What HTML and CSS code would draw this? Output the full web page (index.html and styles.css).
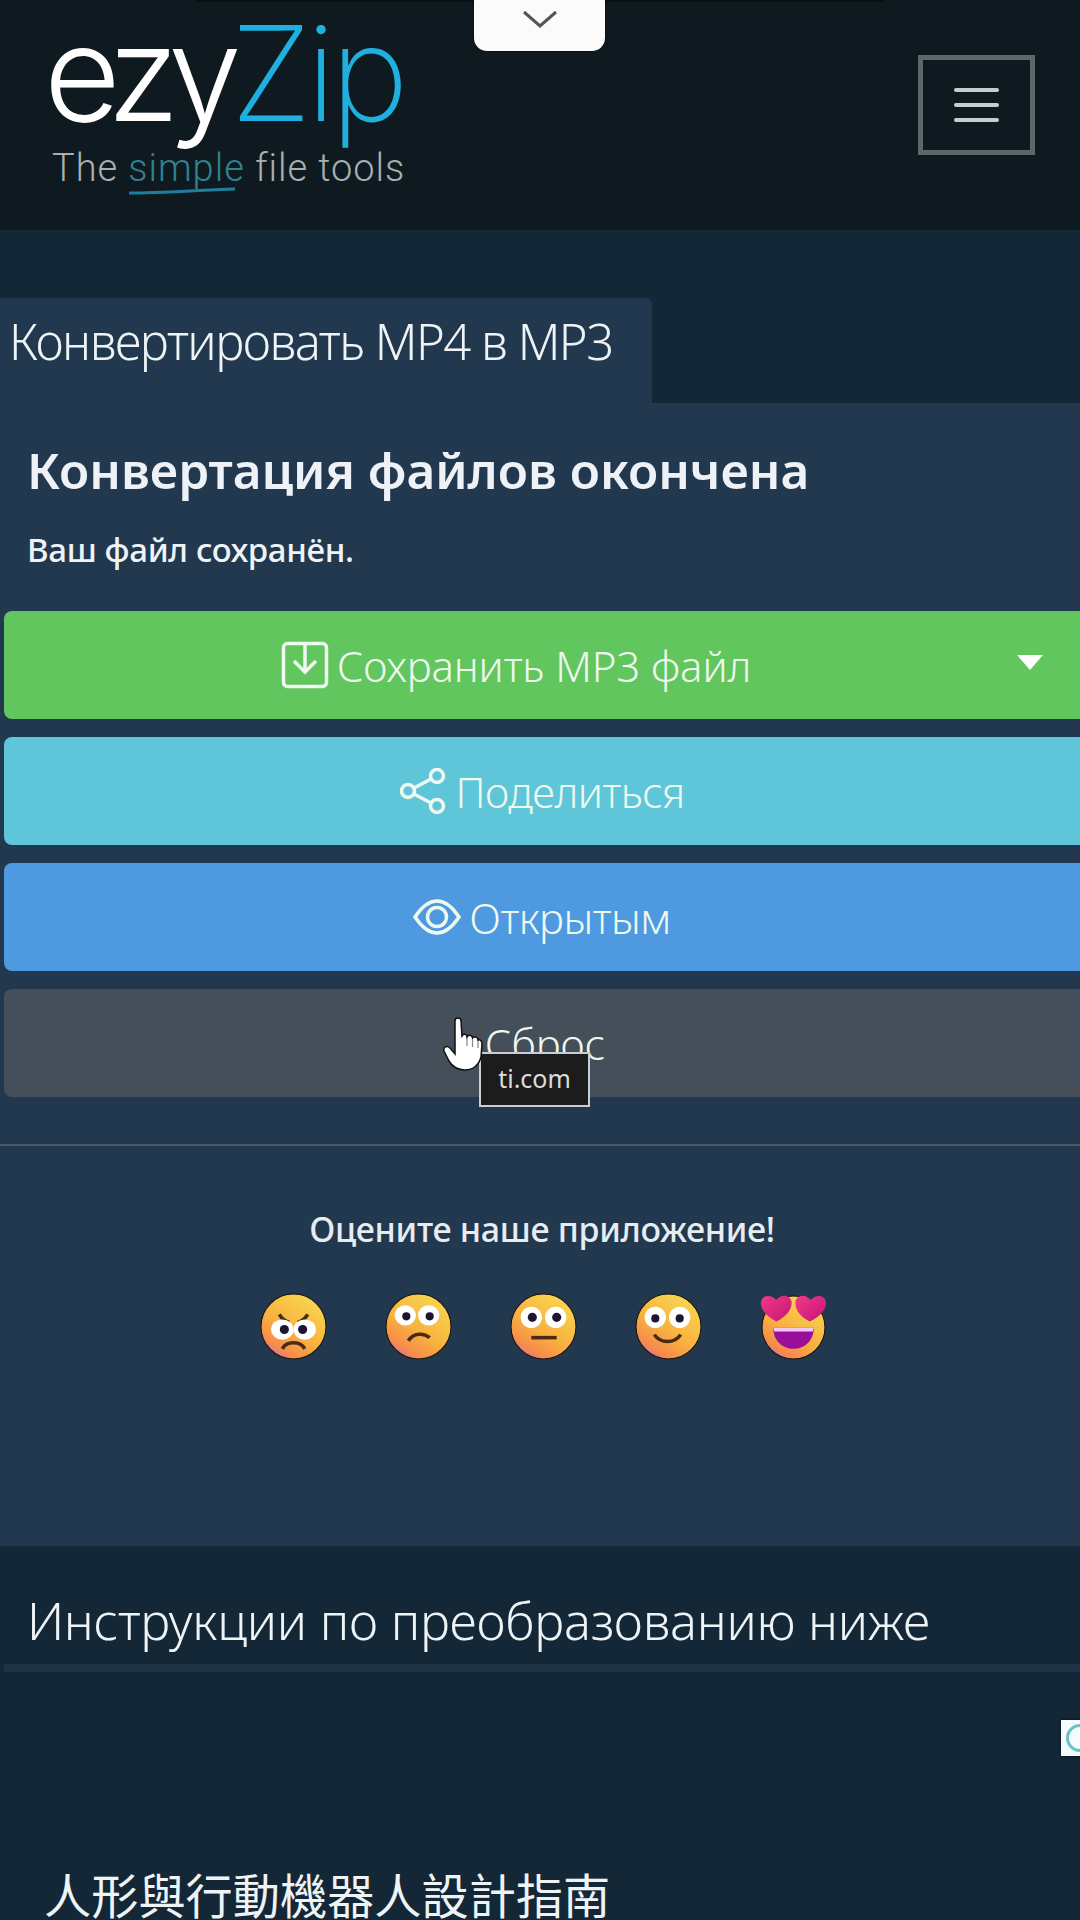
FILE: index.html
```html
<!DOCTYPE html>
<html lang="ru">
<head>
<meta charset="utf-8">
<title>Конвертировать MP4 в MP3</title>
<link rel="stylesheet" href="styles.css">
</head>
<body>
<svg class="defs" aria-hidden="true">
  <defs>
    <linearGradient id="face" x1="0.8" y1="0.1" x2="0.25" y2="0.95">
      <stop offset="0" stop-color="#f7d44f"/>
      <stop offset="0.55" stop-color="#f9b23f"/>
      <stop offset="0.9" stop-color="#f78a4c"/>
      <stop offset="1" stop-color="#d87aa0"/>
    </linearGradient>
    <linearGradient id="heart" x1="0" y1="0" x2="1" y2="1">
      <stop offset="0" stop-color="#f23a86"/>
      <stop offset="1" stop-color="#c3147a"/>
    </linearGradient>
  </defs>
</svg>

<div class="shade-top"></div>
<button class="pull-tab" aria-label="Развернуть">
  <svg viewBox="0 0 36 20" width="36" height="20"><path d="M2 3 L18 17 L34 3" fill="none" stroke="#555" stroke-width="3"/></svg>
</button>

<header class="topbar">
  <a class="logo">
    <div class="logo-word"><span class="ezy">ezy</span><span class="zip">Zip</span></div>
    <div class="logo-tag">The <span class="simple">simple<svg class="swoosh" viewBox="0 0 108 8" preserveAspectRatio="none"><path d="M1 6 C35 6 70 3 107 2" fill="none" stroke="#1d7f9c" stroke-width="3"/></svg></span> file tools</div>
  </a>
  <button class="burger" aria-label="Меню"><span></span><span></span><span></span></button>
</header>

<main class="page">
  <h1 class="tab">Конвертировать MP4 в MP3</h1>
  <section class="card">
    <h2 class="done-title">Конвертация файлов окончена</h2>
    <p class="done-sub">Ваш файл сохранён.</p>
    <div class="actions">
      <a class="btn btn-green">
        <svg class="ico" viewBox="0 0 48 48" width="48" height="48"><rect x="2.5" y="2.5" width="43" height="43" rx="4" fill="none" stroke="currentColor" stroke-width="3.5"/><path d="M24 3 V29 M13 20 L24 31 L35 20" fill="none" stroke="currentColor" stroke-width="3.5"/></svg>
        <span>Сохранить MP3 файл</span>
        <i class="caret"></i>
      </a>
      <a class="btn btn-cyan">
        <svg class="ico" viewBox="0 0 48 48" width="48" height="48"><g fill="none" stroke="currentColor" stroke-width="3.5"><circle cx="38" cy="9" r="6.5"/><circle cx="9" cy="24" r="6.5"/><circle cx="38" cy="39" r="6.5"/><path d="M15 21 L32 12 M15 27 L32 36"/></g></svg>
        <span>Поделиться</span>
      </a>
      <a class="btn btn-blue">
        <svg class="ico" viewBox="0 0 48 48" width="48" height="48"><g fill="none" stroke="currentColor" stroke-width="3.5"><path d="M2 24 C10 12 17 8 24 8 C31 8 38 12 46 24 C38 36 31 40 24 40 C17 40 10 36 2 24 Z"/><circle cx="24" cy="24" r="9.5"/></g></svg>
        <span>Открытым</span>
      </a>
      <a class="btn btn-grey">
        <span class="reset-label">Сброс</span>
        <svg class="hand" viewBox="0 0 40 54" width="40" height="54"><path d="M12 4 C12 0 18 0 18 4 L19 19 C21 16 24 17 24 20 C26 17 29 18 29.500 21 C31 19 35 20 35 23 C37 22 39 24 39 27 L38 40 C36 48 30 53 22 53 C14 53 9 49 6 44 L1 34 C0 30 4 28 7 31 L12 37 Z" fill="#fff" stroke="#111" stroke-width="1.500"/><path d="M24 21 V29 M29.500 22 V30 M35 24 V31" fill="none" stroke="#888" stroke-width="1.200"/></svg>
        <span class="tip">ti.com</span>
      </a>
    </div>
    <hr class="rule">
    <p class="rate-title">Оцените наше приложение!</p>
    <div class="rate-row">
      <svg class="emoji" viewBox="0 0 66 66" width="67" height="67"><circle cx="33" cy="33" r="32" fill="url(#face)" stroke="#1a1208" stroke-width="1"/><path d="M19 21 C22 26 25 28 29 29 M47 21 C44 26 41 28 37 29" fill="none" stroke="#4a2a12" stroke-width="3.500"/><ellipse cx="22" cy="36" rx="11" ry="10" fill="#fff"/><ellipse cx="44" cy="36" rx="11" ry="10" fill="#fff"/><circle cx="24" cy="36" r="4.500" fill="#1c1430"/><circle cx="42" cy="36" r="4.500" fill="#1c1430"/><path d="M22 55 C26 47 40 47 44 55" fill="none" stroke="#4a2a12" stroke-width="3.500"/></svg>
      <svg class="emoji" viewBox="0 0 66 66" width="67" height="67"><circle cx="33" cy="33" r="32" fill="url(#face)" stroke="#1a1208" stroke-width="1"/><ellipse cx="20" cy="22" rx="10.500" ry="10" fill="#fff"/><ellipse cx="43" cy="22" rx="10.500" ry="10" fill="#fff"/><circle cx="21" cy="23" r="4" fill="#1c1430"/><circle cx="44" cy="23" r="4" fill="#1c1430"/><path d="M23 47 C28 39 38 39 44 44" fill="none" stroke="#4a2a12" stroke-width="3.500"/></svg>
      <svg class="emoji" viewBox="0 0 66 66" width="67" height="67"><circle cx="33" cy="33" r="32" fill="url(#face)" stroke="#1a1208" stroke-width="1"/><ellipse cx="21" cy="24" rx="10.500" ry="10.500" fill="#fff"/><ellipse cx="45" cy="24" rx="10.500" ry="10.500" fill="#fff"/><circle cx="22" cy="24" r="4.500" fill="#1c1430"/><circle cx="46" cy="24" r="4.500" fill="#1c1430"/><path d="M21 44 H46" fill="none" stroke="#4a2a12" stroke-width="3.500"/></svg>
      <svg class="emoji" viewBox="0 0 66 66" width="67" height="67"><circle cx="33" cy="33" r="32" fill="url(#face)" stroke="#1a1208" stroke-width="1"/><ellipse cx="20" cy="24" rx="10.500" ry="10.500" fill="#fff"/><ellipse cx="44" cy="24" rx="10.500" ry="10.500" fill="#fff"/><circle cx="20" cy="25" r="4" fill="#1c1430"/><circle cx="44" cy="25" r="4" fill="#1c1430"/><path d="M19 41 C25 50 39 50 45 41" fill="none" stroke="#4a2a12" stroke-width="3.500"/></svg>
      <svg class="emoji" viewBox="0 0 66 66" width="67" height="67"><circle cx="33" cy="34" r="31" fill="url(#face)" stroke="#1a1208" stroke-width="1"/><path d="M13 34 H53 C53 47 44 55 33 55 C22 55 13 47 13 34 Z" fill="#9a0f9a"/><path d="M13 34 H53 L52 38 H14 Z" fill="#f4c8f6"/><path d="M16 28 C6 23 0 15 1 9 C2 2 11 1 16 7 C20 1 29 1 31 8 C32 15 27 23 16 28 Z" fill="url(#heart)"/><path d="M49 28 C38 23 34 15 35 8 C37 1 46 1 50 7 C55 1 64 2 65 9 C66 15 60 23 49 28 Z" fill="url(#heart)"/></svg>
    </div>
  </section>
  <section class="guide">
    <h2 class="guide-title">Инструкции по преобразованию ниже</h2>
    <div class="guide-rule"></div>
    <div class="ad-row"><div class="ad-mark"><i></i></div></div>
    <p class="ad-title">人形與行動機器人設計指南</p>
  </section>
</main>
</body>
</html>
```
FILE: styles.css
```css
* { box-sizing: border-box; }
html, body { margin: 0; padding: 0; }
body {
  width: 1080px;
  height: 1920px;
  overflow: hidden;
  position: relative;
  background: #142737;
  color: #eef3f5;
  font-family: "Noto Sans", "Open Sans", sans-serif;
}
.defs { width: 0; height: 0; position: absolute; }

.shade-top {
  position: absolute; left: 195px; top: 0;
  width: 690px; height: 2px; background: #0a1016;
}
.pull-tab {
  position: absolute; left: 474px; top: 0;
  width: 131px; height: 51px; padding: 0;
  display: flex; align-items: center; justify-content: center;
  background: #fbfbfb; border: 0; border-radius: 0 0 13px 13px;
  box-shadow: 0 0 2px #000;
  z-index: 3;
}
.pull-tab svg { margin-top: -14px; }

.topbar {
  height: 230px;
  background: #0f1a20;
  display: flex;
  justify-content: space-between;
  align-items: flex-start;
  padding: 0 45px 0 44px;
}
.logo { display: block; color: #fff; }
.logo-word {
  font-family: Inter, sans-serif;
  font-size: 132px;
  line-height: 146px;
  height: 146px;
  white-space: nowrap;
}
.ezy { color: #fff; font-weight: 350; letter-spacing: -11px; }
.zip { color: #1fb0e0; font-weight: 250; letter-spacing: -5.5px; }
.logo-tag {
  font-family: Roboto, sans-serif;
  font-weight: 300;
  font-size: 38px;
  line-height: 44px;
  letter-spacing: 0.95px;
  color: #a8b0b0;
  padding-left: 8px;
  white-space: nowrap;
}
.simple { color: #2f8391; position: relative; }
.swoosh { position: absolute; left: 0; bottom: -5px; width: 108px; height: 8px; }

.burger {
  margin-top: 55px;
  width: 117px; height: 100px;
  background: transparent;
  border: 5px solid #5b676b;
  padding: 0;
  display: flex; flex-direction: column; align-items: center; justify-content: center;
  gap: 11px;
}
.burger span { display: block; width: 45px; height: 4px; border-radius: 3px; background: #c6cdd0; }

.page { padding-top: 68px; }
.tab {
  margin: 0;
  width: 652px; height: 105px;
  padding: 0 0 0 9px;
  background: #22384e;
  border-radius: 0 6px 0 0;
  font-size: 49px; font-weight: 300;
  line-height: 87px;
  letter-spacing: -1.5px;
  white-space: nowrap;
}
.card {
  height: 1143px;
  background: #22384e;
  padding-top: 37px;
}
.done-title {
  margin: 0 0 0 27px;
  font-size: 49.5px; font-weight: 600;
  line-height: 60px;
  color: #eef2f6;
  white-space: nowrap;
}
.done-sub {
  margin: 30px 0 0 27px;
  font-size: 33px; font-weight: 500;
  line-height: 40px;
  letter-spacing: -0.35px;
}
.actions {
  margin: 41px 0 0 4px;
  display: flex; flex-direction: column; gap: 18px;
}
.btn {
  position: relative;
  height: 108px;
  border-radius: 8px 0 0 8px;
  display: flex; align-items: center; justify-content: center;
  gap: 8px;
  color: #eef9f0;
  font-size: 42px; font-weight: 300;
  letter-spacing: -0.5px;
}
.btn-green { background: #62c65f; padding-right: 52px; letter-spacing: -0.1px; }
.btn-cyan { background: #5fc5d9; }
.btn-blue { background: #4f99e0; }
.btn-grey { background: #454f5a; }
.ico { flex: none; margin-top: -1px; }
.caret {
  position: absolute; right: 37px; top: 44px;
  width: 0; height: 0;
  border-left: 13px solid transparent;
  border-right: 13px solid transparent;
  border-top: 15px solid #fff;
}
.reset-label { margin-left: 6px; letter-spacing: 0; }
.hand { position: absolute; left: 439px; top: 28px; z-index: 2; }
.tip {
  position: absolute; left: 475px; top: 63px;
  width: 111px; height: 55px;
  background: #1c1c1c;
  border: 2px solid #c8ced4;
  color: #dcdcdc;
  font-size: 25px; font-weight: 400; letter-spacing: 0;
  line-height: 49px;
  text-align: center;
  z-index: 1;
}
.rule {
  margin: 47px 0 0;
  border: 0; height: 2px; background: #47596b;
}
.rate-title {
  margin: 61px 0 0;
  text-align: center;
  font-size: 34px; font-weight: 500;
  line-height: 44px;
  letter-spacing: -0.3px;
  padding-left: 4px;
  color: #e6ecef;
}
.rate-row {
  margin-top: 42px;
  display: flex; justify-content: center;
  gap: 58px;
  padding-left: 6px;
}
.emoji { flex: none; }

.guide { background: #142737; padding-top: 40px; }
.guide-title {
  margin: 0 0 0 27px;
  font-size: 50.5px; font-weight: 300;
  line-height: 70px;
  letter-spacing: -0.25px;
  white-space: nowrap;
}
.guide-rule { margin: 8px 0 0 4px; height: 8px; background: #1f3344; }
.ad-row { margin-top: 48px; display: flex; justify-content: flex-end; }
.ad-mark {
  width: 19px; height: 36px;
  background: #f4fbfc;
  box-shadow: 0 0 2px #000;
  overflow: hidden;
  display: flex; align-items: center; padding-left: 5px;
}
.ad-mark i {
  flex: none; display: block;
  width: 28px; height: 28px; border-radius: 50%;
  border: 3px solid #69c2c4;
}
.ad-title {
  margin: 108px 0 0 44px;
  font-family: "Noto Sans CJK TC", "Noto Sans", sans-serif;
  font-size: 47.2px; font-weight: 400;
  line-height: 60px;
  white-space: nowrap;
  color: #eef3f5;
}
```
